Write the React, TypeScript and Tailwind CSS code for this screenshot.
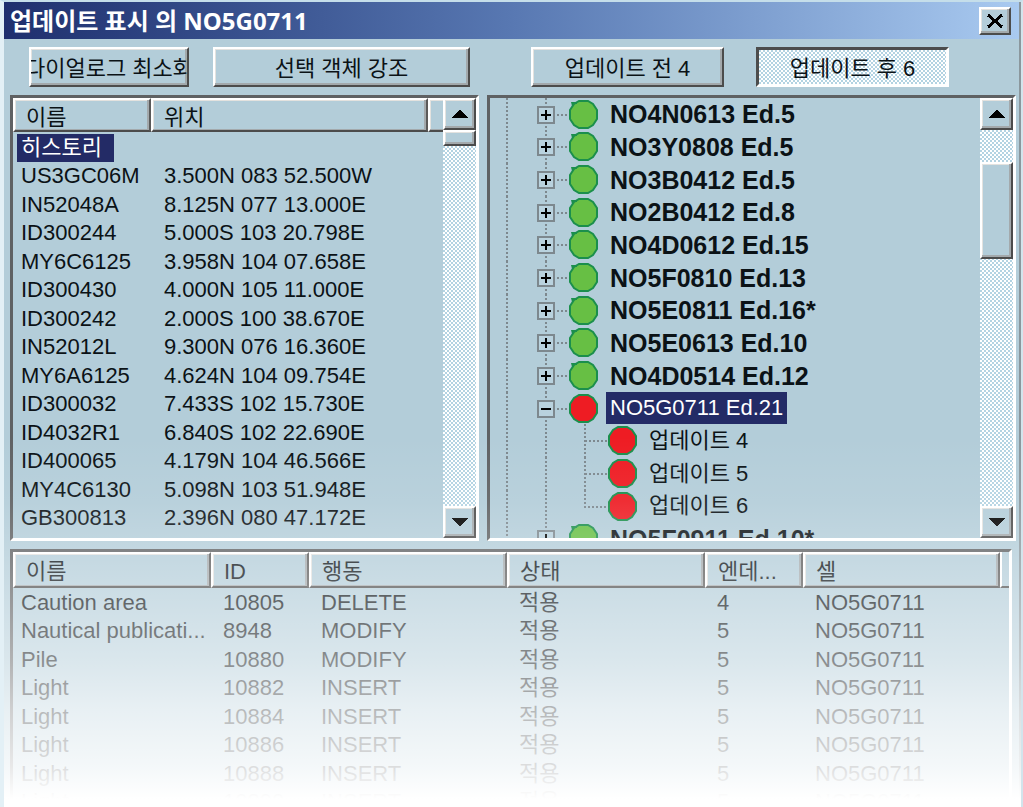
import React from "react";
import clsx from "clsx";

interface Cell {
  name: string;
  position: string;
}

interface Chart {
  label: string;
  level?: "chart" | "update";
  state?: "open" | "closed";
  last?: boolean;
}

const cells: Cell[] = [
  { name: "US3GC06M", position: "3.500N 083 52.500W" },
  { name: "IN52048A", position: "8.125N 077 13.000E" },
  { name: "ID300244", position: "5.000S 103 20.798E" },
  { name: "MY6C6125", position: "3.958N 104 07.658E" },
  { name: "ID300430", position: "4.000N 105 11.000E" },
  { name: "ID300242", position: "2.000S 100 38.670E" },
  { name: "IN52012L", position: "9.300N 076 16.360E" },
  { name: "MY6A6125", position: "4.624N 104 09.754E" },
  { name: "ID300032", position: "7.433S 102 15.730E" },
  { name: "ID4032R1", position: "6.840S 102 22.690E" },
  { name: "ID400065", position: "4.179N 104 46.566E" },
  { name: "MY4C6130", position: "5.098N 103 51.948E" },
  { name: "GB300813", position: "2.396N 080 47.172E" },
];

const charts: Chart[] = [
  { label: "NO4N0613 Ed.5" },
  { label: "NO3Y0808 Ed.5" },
  { label: "NO3B0412 Ed.5" },
  { label: "NO2B0412 Ed.8" },
  { label: "NO4D0612 Ed.15" },
  { label: "NO5F0810 Ed.13" },
  { label: "NO5E0811 Ed.16*" },
  { label: "NO5E0613 Ed.10" },
  { label: "NO4D0514 Ed.12" },
  { label: "NO5G0711 Ed.21", state: "open" },
  { label: "업데이트 4", level: "update" },
  { label: "업데이트 5", level: "update" },
  { label: "업데이트 6", level: "update", last: true },
  { label: "NO5F0911 Ed.10*" },
];

const objectHeaders = ["이름", "ID", "행동", "상태", "엔데...", "셀"];

const objects = [
  ["Caution area", "10805", "DELETE", "적용", "4", "NO5G0711"],
  ["Nautical publicati...", "8948", "MODIFY", "적용", "5", "NO5G0711"],
  ["Pile", "10880", "MODIFY", "적용", "5", "NO5G0711"],
  ["Light", "10882", "INSERT", "적용", "5", "NO5G0711"],
  ["Light", "10884", "INSERT", "적용", "5", "NO5G0711"],
  ["Light", "10886", "INSERT", "적용", "5", "NO5G0711"],
  ["Light", "10888", "INSERT", "적용", "5", "NO5G0711"],
  ["Light", "10890", "INSERT", "적용", "5", "NO5G0711"],
];

const raised =
  "border-2 border-t-white border-l-white border-r-[#4c4c4c] border-b-[#4c4c4c] shadow-[inset_-2px_-2px_0_#a3a9ac,inset_1px_1px_0_#e3e2df] bg-[#b3cdd9]";
const sunken =
  "border-[3px] border-t-[#5f6163] border-l-[#5f6163] border-r-white border-b-white";
const dither =
  "bg-[repeating-conic-gradient(#ffffff_0_25%,#b3d3e2_0_50%)] bg-[length:4px_4px]";
const headerCell =
  "h-[34px] border-2 border-t-white border-l-white border-r-[#5a5a5a] border-b-[#4c4c4c] shadow-[inset_-2px_-1px_0_#a3a9ac,inset_1px_1px_0_#e3e2df] px-[11px] pt-1 text-left font-normal whitespace-nowrap overflow-hidden";

function PushButton({
  children,
  className,
  pressed = false,
}: {
  children: React.ReactNode;
  className?: string;
  pressed?: boolean;
}) {
  return (
    <button
      type="button"
      aria-pressed={pressed}
      className={clsx(
        "flex h-10 items-center justify-center overflow-hidden whitespace-nowrap pt-1",
        pressed
          ? `border-[3px] border-t-[#4c4c4c] border-l-[#4c4c4c] border-r-white border-b-white ${dither}`
          : raised,
        className
      )}
    >
      {children}
    </button>
  );
}

function ScrollButton({ direction }: { direction: "up" | "down" }) {
  return (
    <button
      type="button"
      aria-label={direction === "up" ? "Scroll up" : "Scroll down"}
      className={clsx("flex h-8 w-full shrink-0 items-center justify-center", raised)}
    >
      <svg width="16" height="8" viewBox="0 0 16 8" fill="#000" shapeRendering="crispEdges">
        {direction === "up" ? <path d="M7 0h2l7 8H0z" /> : <path d="M0 0h16L9 8H7z" />}
      </svg>
    </button>
  );
}

function TreeRow({ chart }: { chart: Chart }) {
  const update = chart.level === "update";
  const open = chart.state === "open";
  return (
    <li className="flex h-[33px] shrink-0 items-center nth-[3n+1]:h-8">
      <svg
        width={update ? 118 : 79}
        height="33"
        viewBox={update ? "0 0 118 33" : "0 0 79 33"}
        fill="none"
        stroke="#7d888e"
        strokeWidth="2"
        className="shrink-0"
        shapeRendering="crispEdges"
      >
        <path d="M17 0v33M56 0v33" strokeDasharray="2 2" />
        {update ? (
          <path d={chart.last ? "M95 0v17h22" : "M95 0v33M95 17h22"} strokeDasharray="2 2" />
        ) : (
          <>
            <path d="M67 17h12" strokeDasharray="2 2" />
            <rect x="48" y="9" width="16" height="16" fill="#b9d2de" />
            <path d={open ? "M51 17h10" : "M51 17h10M56 12v10"} stroke="#000" />
          </>
        )}
      </svg>
      <svg width="29" height="29" viewBox="0 0 29 29" className="shrink-0">
        <path
          d="M10 1h9l5 3 4 6v9l-4 6-5 3h-9l-5-3-4-6v-9l4-6z"
          fill={update || open ? "#ee1c23" : "#67bf44"}
          stroke="#1b8f4c"
          strokeWidth="2"
        />
        {!update && !open && <path d="M2 2h6v2H5v2H3z" fill="#1b8f4c" />}
      </svg>
      <span
        className={clsx(
          "ml-2 px-1 leading-8 whitespace-nowrap",
          open && "bg-[#232b66] text-white",
          !update && !open && "text-[25px] font-bold"
        )}
      >
        {chart.label}
      </span>
    </li>
  );
}

export default function App() {
  return (
    <main className="relative flex h-screen flex-col overflow-hidden border-t-2 border-r-2 border-l-4 border-t-[#c5deea] border-r-[#d3e4ec] border-l-[#e3f0f6] bg-[#b3cdd9] font-['Liberation_Sans','Noto_Sans_CJK_KR',sans-serif] text-[22px] leading-7 text-[#0b1216]">
      <div className="flex min-h-0 flex-1 flex-col border-r-2 border-[#8b979d]">
        <header className="flex h-[37px] shrink-0 items-center justify-between bg-linear-to-r from-[#1f2f6e] via-[#5878b2] to-[#a9caf0] pr-2 pl-[6px]">
          <h1 className="font-['Noto_Sans','Noto_Sans_CJK_KR',sans-serif] text-2xl leading-7 font-bold whitespace-nowrap text-white">
            업데이트 표시 의 NO5G0711
          </h1>
          <button
            type="button"
            aria-label="Close"
            className={clsx("flex h-7 w-8 items-center justify-center", raised)}
          >
            <svg width="18" height="14" viewBox="0 0 18 14" stroke="#000" strokeWidth="3" shapeRendering="crispEdges">
              <path d="M2 1l14 12M16 1L2 13" />
            </svg>
          </button>
        </header>

        <div className="flex min-h-0 flex-1 flex-col gap-2 pt-2 pl-[6px] pr-[3px]">
          <div className="grid shrink-0 grid-cols-[469fr_529fr] gap-x-2">
            <div className="flex gap-6 pl-[19px]">
              <PushButton className="w-40">다이얼로그 최소화</PushButton>
              <PushButton className="w-[257px]">선택 객체 강조</PushButton>
            </div>
            <div className="flex gap-8 pl-11">
              <PushButton className="w-[193px]">업데이트 전 4</PushButton>
              <PushButton className="w-[193px]" pressed>
                업데이트 후 6
              </PushButton>
            </div>
          </div>

          <div className="grid h-[446px] shrink-0 grid-cols-[469fr_529fr] gap-x-2">
            <section className={clsx("flex min-w-0 overflow-hidden", sunken)}>
              <table className="block min-w-0 flex-1 overflow-hidden">
                <thead className="block">
                  <tr className="flex">
                    <th className={clsx("w-[138px] shrink-0", headerCell)}>이름</th>
                    <th className={clsx("w-[277px] shrink-0", headerCell)}>위치</th>
                    <th className={clsx("flex-1", headerCell)} />
                  </tr>
                </thead>
                <tbody className="block pt-[2px]">
                  <tr className="flex h-7 pl-1">
                    <td className="w-[97px] bg-[#232b66] px-1 text-white">히스토리</td>
                  </tr>
                  {cells.map((cell) => (
                    <tr key={cell.name} className="flex h-7 pl-2 even:h-[29px]">
                      <td className="w-[143px] shrink-0">{cell.name}</td>
                      <td className="whitespace-nowrap">{cell.position}</td>
                    </tr>
                  ))}
                </tbody>
              </table>
              <div className={clsx("flex w-[33px] shrink-0 flex-col", dither)}>
                <ScrollButton direction="up" />
                <div className={clsx("h-4", raised)} />
                <div className="flex-1" />
                <ScrollButton direction="down" />
              </div>
            </section>

            <section className={clsx("flex min-w-0 overflow-hidden", sunken)}>
              <ul className="flex min-w-0 flex-1 flex-col overflow-hidden">
                {charts.map((chart) => (
                  <TreeRow key={chart.label} chart={chart} />
                ))}
              </ul>
              <div className={clsx("flex w-[33px] shrink-0 flex-col", dither)}>
                <ScrollButton direction="up" />
                <div className="h-8" />
                <div className={clsx("h-[97px]", raised)} />
                <div className="flex-1" />
                <ScrollButton direction="down" />
              </div>
            </section>
          </div>

          <section className={clsx("mr-1 min-h-0 flex-1 overflow-hidden border-b-0", sunken)}>
            <table className="w-full table-fixed border-separate border-spacing-0">
              <colgroup>
                <col className="w-[198px]" />
                <col className="w-[98px]" />
                <col className="w-[198px]" />
                <col className="w-[198px]" />
                <col className="w-[98px]" />
                <col className="w-[197px]" />
                <col />
              </colgroup>
              <thead>
                <tr>
                  {objectHeaders.map((title) => (
                    <th key={title} className={headerCell}>
                      {title}
                    </th>
                  ))}
                  <th className="border-b-2 border-l-2 border-b-[#4c4c4c] border-l-white" />
                </tr>
              </thead>
              <tbody>
                {objects.map((row) => (
                  <tr key={row[1]} className="h-[29px] even:h-7">
                    {row.map((value, i) => (
                      <td
                        key={i}
                        className={clsx("p-0 whitespace-nowrap", i === 0 ? "pl-2" : "pl-3")}
                      >
                        {value}
                      </td>
                    ))}
                    <td />
                  </tr>
                ))}
              </tbody>
            </table>
          </section>
        </div>
      </div>

      {/* bottom fade-out */}
      <div className="pointer-events-none absolute inset-x-[-4px] inset-y-0 bg-[linear-gradient(to_bottom,transparent_54%,rgba(255,255,255,0.08)_62%,rgba(255,255,255,0.3)_72%,rgba(255,255,255,0.52)_82%,rgba(255,255,255,0.7)_88%,rgba(255,255,255,0.86)_95%,#fff_99%)]" />
    </main>
  );
}
